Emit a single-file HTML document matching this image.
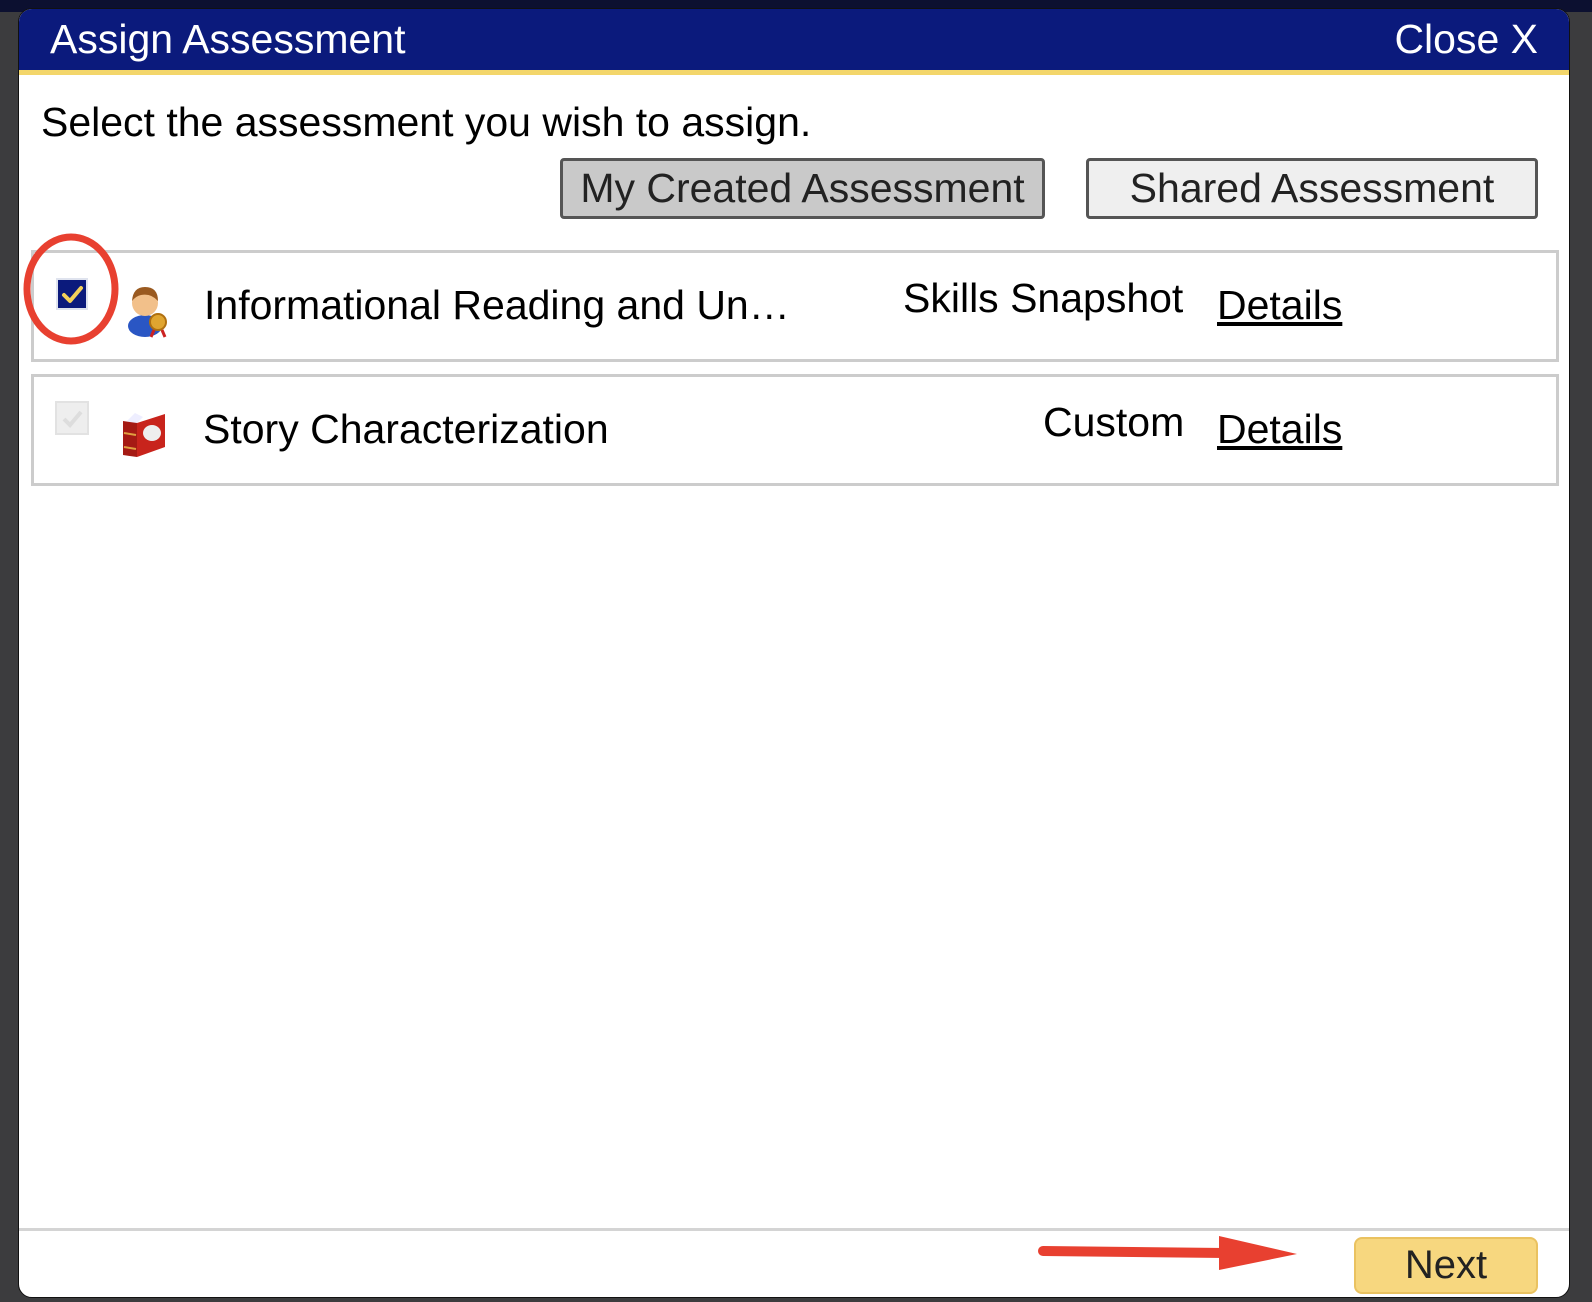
<!DOCTYPE html>
<html><head><style>
*{margin:0;padding:0;box-sizing:border-box}
body{width:1592px;height:1302px;background:#3c3c3e;position:relative;overflow:hidden;font-family:"Liberation Sans",sans-serif;}
.top{position:absolute;left:0;top:0;width:1592px;height:12px;background:#0c1030}
.dlg{position:absolute;left:18px;top:8px;width:1552px;height:1290px;background:#fff;border-radius:14px;overflow:hidden;border:1px solid #111}
.title{position:absolute;left:0;top:0;width:100%;height:66px;background:#0b1a7c;border-bottom:5px solid #f3d66b;color:#fff;font-size:41px}
.title .l{position:absolute;left:31px;top:7px}
.title .r{position:absolute;right:31px;top:7px}
.abs{position:absolute;white-space:nowrap}
.btn{position:absolute;border:3px solid #555;border-radius:4px;font-size:41px;text-align:center;line-height:54px;color:#222}
.row{position:absolute;left:12px;width:1528px;height:112px;border:3px solid #ccc}
.t{font-size:41px;color:#000}
.d{text-decoration:underline}
</style></head><body>
<div class="top"></div>
<div class="dlg">
 <div class="title"><span class="l">Assign Assessment</span><span class="r">Close X</span></div>
 <div class="abs t" style="left:22px;top:90px;font-size:41px">Select the assessment you wish to assign.</div>
 <div class="btn" style="left:541px;top:149px;width:485px;height:61px;background:#c9c9c9">My Created Assessment</div>
 <div class="btn" style="left:1067px;top:149px;width:452px;height:61px;background:#efefef">Shared Assessment</div>
 <div class="row" style="top:241px"></div>
 <div class="row" style="top:365px"></div>
 <div class="abs" style="left:37px;top:269px;width:32px;height:32px;background:#0b1a7c;border:2px solid #dfe3ee"></div>
 <svg class="abs" style="left:37px;top:269px" width="32" height="32"><path d="M8 17 L14 23 L25 10" stroke="#f3d05a" stroke-width="4" fill="none" stroke-linecap="round" stroke-linejoin="round"/></svg>
 <svg class="abs" style="left:104px;top:268px" width="50" height="62"><ellipse cx="22" cy="49" rx="17" ry="11" fill="#2a56c4"/><circle cx="22" cy="26" r="13" fill="#f2c08a"/><path d="M9 24 Q10 10 22 10 Q35 10 35 24 Q28 16 18 18 Q13 19 9 24Z" fill="#9a5a20"/><circle cx="35" cy="45" r="8" fill="#e0a530" stroke="#b07010" stroke-width="2"/><path d="M31 53 l-3 7 M39 53 l3 7" stroke="#c22" stroke-width="3"/></svg>
 <div class="abs t" style="left:185px;top:273px">Informational Reading and Un…</div>
 <div class="abs t" style="left:884px;top:266px">Skills Snapshot</div>
 <div class="abs t d" style="left:1198px;top:273px">Details</div>
 <div class="abs" style="left:36px;top:392px;width:34px;height:34px;background:#eee;border:2px solid #e2e2e2"></div>
 <svg class="abs" style="left:36px;top:392px" width="34" height="34"><path d="M9 18 L15 24 L26 11" stroke="#ddd" stroke-width="4" fill="none"/></svg>
 <svg class="abs" style="left:102px;top:400px" width="48" height="50"><path d="M6 12 L14 4 L22 8 L14 16Z" fill="#eef"/><path d="M2 12 L16 14 L16 48 L2 46Z" fill="#a51a14"/><path d="M16 14 L44 5 L44 38 L16 48Z" fill="#c8241c"/><ellipse cx="31" cy="24" rx="9" ry="8" fill="#eee"/><path d="M3 24 L15 26 M3 38 L15 40" stroke="#e0a040" stroke-width="2"/></svg>
 <div class="abs t" style="left:184px;top:397px">Story Characterization</div>
 <div class="abs t" style="left:1024px;top:390px">Custom</div>
 <div class="abs t d" style="left:1198px;top:397px">Details</div>
 <svg class="abs" style="left:0;top:212px" width="110" height="130"><ellipse cx="52" cy="68" rx="44" ry="52" fill="none" stroke="#e84030" stroke-width="7"/></svg>
 <div class="abs" style="left:0;top:1219px;width:100%;height:3px;background:#d4d4d4"></div>
 <svg class="abs" style="left:1010px;top:1222px" width="300" height="50"><path d="M14 20 L196 22" stroke="#e84030" stroke-width="10" stroke-linecap="round"/><path d="M190 5 L268 23 L190 39Z" fill="#e84030"/></svg>
 <div class="abs" style="left:1335px;top:1228px;width:184px;height:57px;background:#f7d77f;border:2px solid #eac260;border-radius:8px;font-size:40px;text-align:center;line-height:53px;color:#222">Next</div>
</div>
</body></html>
